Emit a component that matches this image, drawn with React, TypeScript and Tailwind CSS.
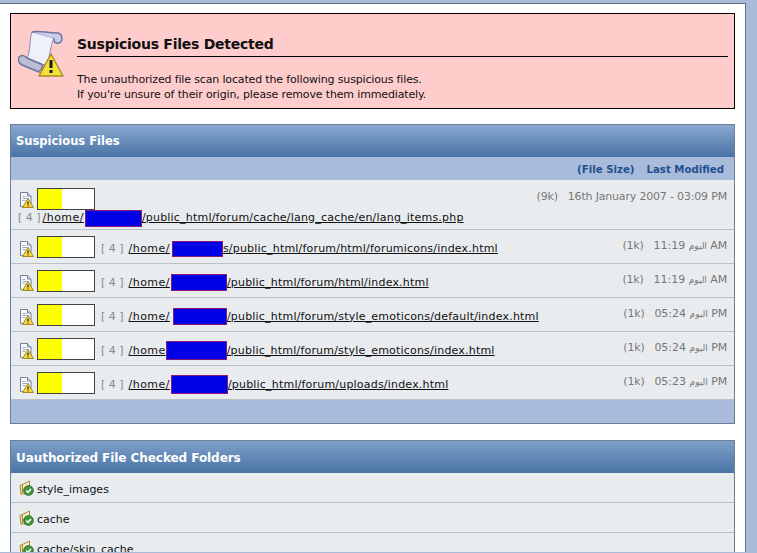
import React from 'react';

const FileIcon = () => (
  <svg width="16" height="17" viewBox="0 0 16 17" className="shrink-0">
    <path d="M2.5 1.5h7l3.5 3.5v10.5h-10.5z" fill="#f6f7fb" stroke="#77829a" />
    <path d="M9.5 1.5v3.5h3.5" fill="#d5dbe8" stroke="#77829a" />
    <path d="M4.5 5.5h3M4.5 7.5h6M4.5 9.5h3" stroke="#a3b0cc" />
    <path d="M10 7.5l5.5 9h-11z" fill="#f4d83c" stroke="#a98a20" strokeLinejoin="round" />
    <path d="M10 10.5v3M10 14.6v1" stroke="#222" strokeWidth="1.2" />
  </svg>
);

const FolderIcon = () => (
  <svg width="15" height="16" viewBox="0 0 15 16" className="shrink-0">
    <path d="M1 5.5l2.5-1v9l-1.5 1z" fill="#f4dfa0" stroke="#a8883a" />
    <path d="M3.5 4.5l7-3.5v7l-5 6.5-2-1z" fill="#fbeec2" stroke="#a8883a" />
    <circle cx="9.5" cy="10.5" r="4.8" fill="#3c9a3c" stroke="#2a6b2a" />
    <path d="M7.2 10.5l1.8 1.8 3-3.4" fill="none" stroke="#fff" strokeWidth="1.5" />
  </svg>
);

const ScrollIcon = () => (
  <svg width="48" height="48" viewBox="0 0 48 48" className="shrink-0">
    <path d="M14 2c-3 8-1 18-5 26l20 8c3-10 3-19 7-28z" fill="#eef0fa" stroke="#8a8fb2" />
    <path d="M14 2c5-2 16 1 26 1 5 1 5 9 1 10-3 1-6-1-5-5" fill="#c9cdea" stroke="#6e739c" strokeWidth="1.5" />
    <path d="M1 27c3-3 6-1 8 1l16 7c-1 3-2 5-4 7L4 35c-4-2-4-6-3-8z" fill="#b9bdd8" stroke="#70759a" strokeWidth="1.5" />
    <path d="M33 24l12 22H21z" fill="#f3e03a" stroke="#a98b2a" strokeWidth="1.5" strokeLinejoin="round" />
    <path d="M33 30v8M33 40v3" stroke="#1a1a1a" strokeWidth="3" />
  </svg>
);

const FileBar = () => (
  <span className="flex h-[22px] w-[58px] shrink-0 border border-[#444444] bg-white">
    <span className="w-[24px] bg-[#ffff00]" />
  </span>
);

const Redact = ({ w, h, ml }: { w: string; h: string; ml: string }) => (
  <span className={`inline-block ${w} ${h} ${ml} -my-2 box-border border border-[#8a1a7a] bg-[#0000e6] align-middle`} />
);

const rows = [
  { before: '/home/', box: 'w-[51px]', boxH: 'h-[16px]', ml: 'ml-[2px]', after: 's/public_html/forum/html/forumicons/index.html', size: '(1k)', time: '11:19 AM' },
  { before: '/home/', box: 'w-[56px]', boxH: 'h-[17px]', ml: 'ml-[1px]', after: '/public_html/forum/html/index.html', size: '(1k)', time: '11:19 AM' },
  { before: '/home/', box: 'w-[54px]', boxH: 'h-[17px]', ml: 'ml-[3px]', after: '/public_html/forum/style_emoticons/default/index.html', size: '(1k)', time: '05:24 PM' },
  { before: '/home', box: 'w-[61px]', boxH: 'h-[19px]', ml: 'ml-0', after: '/public_html/forum/style_emoticons/index.html', size: '(1k)', time: '05:24 PM' },
  { before: '/home/', box: 'w-[57px]', boxH: 'h-[19px]', ml: 'ml-[1px]', after: '/public_html/forum/uploads/index.html', size: '(1k)', time: '05:23 PM' },
];

const folders = ['style_images', 'cache', 'cache/skin_cache'];

const App: React.FC = () => {
  return (
    <div className="h-[553px] w-[757px] overflow-hidden bg-[#a8bcd9] font-['DejaVu_Sans',sans-serif] text-[11px] text-[#111111]">
      <div className="h-[3px] bg-[#a8bcd9]" />
      <div className="mr-[11px] h-[549px] overflow-hidden border-r border-t border-[#5f6f85] bg-white px-[10px] pt-[9px]">
        {/* warning box */}
        <div className="flex h-[96px] w-[725px] border border-black bg-[#ffcccc] pl-[7px] pr-[6px]">
          <div className="mt-[16px]">
            <ScrollIcon />
          </div>
          <div className="ml-[11px] flex-1 pt-[21px]">
            <div className="border-b border-black pb-[3px] text-[14px] leading-[18px] font-bold tracking-[-0.25px]">Suspicious Files Detected</div>
            <div className="mt-[15px] leading-[15px] tracking-[-0.15px]">
              The unauthorized file scan located the following suspicious files.
              <br />
              If you're unsure of their origin, please remove them immediately.
            </div>
          </div>
        </div>

        {/* suspicious files */}
        <div className="mt-[15px] w-[725px] border border-[#6d7f95] bg-[#a9bcdb]">
          <div className="flex h-[32px] items-center bg-gradient-to-b from-[#89a7cf] to-[#4a74a6] px-[5px] pt-[2px] text-[11.5px] font-bold text-white">Suspicious Files</div>
          <div className="flex h-[23px] items-center justify-end gap-[12px] pr-[10px] pt-[3px] text-[10.2px] font-bold text-[#24508f]">
            <span>(File Size)</span>
            <span>Last Modified</span>
          </div>
          <div className="h-[50px] border-b border-[#b9c0c8] bg-[#e9ecef] pl-[7px] pr-[7px] pt-[8px]">
            <div className="flex">
              <div className="mt-[3px] mr-[3px]">
                <FileIcon />
              </div>
              <FileBar />
              <span className="ml-auto pt-[1px] tracking-[-0.18px] text-[#777777]">(9k)&nbsp;&nbsp;&nbsp;16th January 2007 - 03:09 PM</span>
            </div>
            <div className="leading-[15px] whitespace-nowrap">
              <span className="text-[#888888]">[ 4 ]</span>
              <span className="ml-[2px] underline">
                <span className="tracking-[0.45px]">/home/</span>
                <Redact w="w-[57px]" h="h-[17px]" ml="ml-[1px]" />
                <span className="tracking-[0.2px]">/public_html/forum/cache/lang_cache/en/lang_items.php</span>
              </span>
            </div>
          </div>
          {rows.map(row => (
            <div key={row.after} className="flex h-[34px] items-center border-b border-[#b9c0c8] bg-[#e9ecef] pl-[7px] pr-[7px] whitespace-nowrap">
              <div className="mr-[3px] mt-[3px]">
                <FileIcon />
              </div>
              <FileBar />
              <span className="ml-[6px] pt-[5px] text-[#888888]">[ 4 ]</span>
              <span className="ml-[5px] pt-[5px] underline">
                <span className="tracking-[0.45px]">{row.before}</span>
                <Redact w={row.box} h={row.boxH} ml={row.ml} />
                <span className="tracking-[0.2px]">{row.after}</span>
              </span>
              <span className="ml-auto tracking-[-0.2px] text-[#777777]">
                {row.size}&nbsp;&nbsp;&nbsp;<span className="text-[9px]">اليوم</span> {row.time}
              </span>
            </div>
          ))}
          <div className="h-[23px]" />
        </div>

        {/* checked folders */}
        <div className="mt-[16px] w-[725px] border border-[#6d7f95]">
          <div className="flex h-[32px] items-center bg-gradient-to-b from-[#7f9fc9] to-[#4a74a6] px-[5px] pt-[2px] text-[12px] font-bold tracking-[-0.06px] text-white">Uauthorized File Checked Folders</div>
          {folders.map(folder => (
            <div key={folder} className="flex h-[30px] items-center gap-[3px] border-b border-[#b9c0c8] bg-[#e9ecef] pl-[8px]">
              <FolderIcon />
              <span className="pt-[5px]">{folder}</span>
            </div>
          ))}
        </div>
      </div>
    </div>
  );
};

export default App;
